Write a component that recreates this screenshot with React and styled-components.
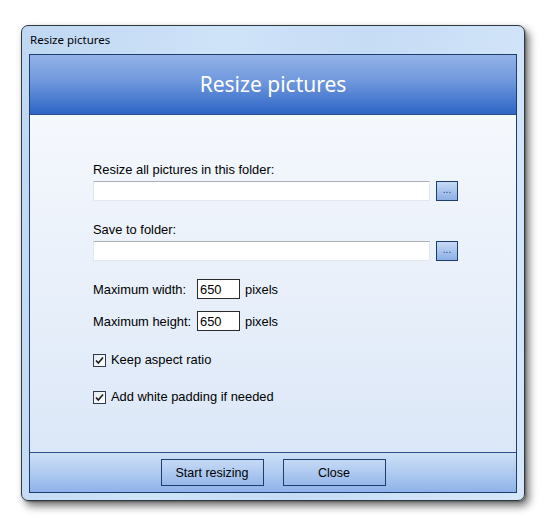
import React from "react";
import styled, { createGlobalStyle } from "styled-components";

const GlobalStyle = createGlobalStyle`
  body {
    margin: 0;
    background: #ffffff;
  }
`;

const App = () => {
  return (
    <>
      <GlobalStyle />
      <Page>
        <Window>
          <TitleBar>Resize pictures</TitleBar>
          <Panel>
            <Header>Resize pictures</Header>
            <Body>
              <Label>Resize all pictures in this folder:</Label>
              <PathRow>
                <PathInput />
                <BrowseButton>...</BrowseButton>
              </PathRow>
              <Label $top={22}>Save to folder:</Label>
              <PathRow>
                <PathInput />
                <BrowseButton>...</BrowseButton>
              </PathRow>
              <SizeRow $top={18}>
                <SizeLabel>Maximum width:</SizeLabel>
                <NumberBox>650</NumberBox>
                <Unit>pixels</Unit>
              </SizeRow>
              <SizeRow $top={12}>
                <SizeLabel>Maximum height:</SizeLabel>
                <NumberBox>650</NumberBox>
                <Unit>pixels</Unit>
              </SizeRow>
              <CheckRow $top={22}>
                <CheckBox checked />
                Keep aspect ratio
              </CheckRow>
              <CheckRow $top={23}>
                <CheckBox checked />
                Add white padding if needed
              </CheckRow>
            </Body>
            <Footer>
              <DialogButton>Start resizing</DialogButton>
              <DialogButton>Close</DialogButton>
            </Footer>
          </Panel>
        </Window>
      </Page>
    </>
  );
};

export default App;

// [Window]--------------------------------------------------------------------------------------------
const Page = styled.div`
  padding: 25px 0 0 21px;
  height: 528px;
  box-sizing: border-box;
`;

const Window = styled.div`
  width: 504px;
  height: 476px;
  box-sizing: border-box;
  border: 1px solid #303840;
  border-radius: 7px;
  background: linear-gradient(100deg, #bfd7f2 0%, #cfe3f8 35%, #c6dcf5 60%, #d6e7fa 100%);
  box-shadow: 4px 5px 9px rgba(0, 0, 0, 0.55), 1px 1px 2px rgba(0, 0, 0, 0.3);
  display: flex;
  flex-direction: column;
`;

const TitleBar = styled.div`
  height: 28px;
  padding: 0 0 2px 8px;
  box-sizing: border-box;
  display: flex;
  align-items: center;
  font-family: "Noto Sans", sans-serif;
  font-size: 11.5px;
  color: #000000;
`;

const Panel = styled.div`
  margin: 0 7px 7px;
  height: 439px;
  box-sizing: border-box;
  border: 1px solid #1d3d6c;
  display: flex;
  flex-direction: column;
`;

// [Header]--------------------------------------------------------------------------------------------
const Header = styled.div`
  height: 60px;
  border-bottom: 1px solid #2b4f86;
  background: linear-gradient(180deg, #93b3e8 0%, #6f97dc 45%, #2d66c6 100%);
  display: flex;
  align-items: center;
  justify-content: center;
  font-family: "Noto Sans", sans-serif;
  font-size: 21px;
  color: #ffffff;
  padding-bottom: 2px;
  box-sizing: border-box;
`;

// [Body]--------------------------------------------------------------------------------------------
const Body = styled.div`
  flex: 1;
  padding: 48px 0 0 63px;
  background: linear-gradient(180deg, #f5f8fd 0%, #e9f0fa 50%, #dbe7f8 100%);
  display: flex;
  flex-direction: column;
  font-family: "Liberation Sans", Arial, sans-serif;
  font-size: 12.9px;
  color: #000000;
`;

const Label = styled.div`
  line-height: 14px;
  margin-top: ${({ $top }) => $top || 0}px;
  margin-bottom: 4px;
`;

const PathRow = styled.div`
  display: flex;
  align-items: center;
  gap: 6px;
`;

const PathInput = styled.div`
  width: 337px;
  height: 20px;
  box-sizing: border-box;
  background: #ffffff;
  border: 1px solid #e3e7ee;
  border-top-color: #acafb6;
`;

const BrowseButton = styled.div`
  width: 22px;
  height: 20px;
  box-sizing: border-box;
  border: 1px solid #1d3d6c;
  background: linear-gradient(180deg, #c6dbf6 0%, #a9c4ee 50%, #8eb0e6 100%);
  display: flex;
  align-items: center;
  justify-content: center;
  font-size: 10px;
  line-height: 10px;
  color: #24406c;
  padding-bottom: 2px;
`;

const SizeRow = styled.div`
  display: flex;
  align-items: center;
  margin-top: ${({ $top }) => $top}px;
`;

const SizeLabel = styled.div`
  width: 104px;
`;

const NumberBox = styled.div`
  width: 43px;
  height: 20px;
  box-sizing: border-box;
  border: 1px solid #2a2a2a;
  background: #ffffff;
  padding-left: 2px;
  display: flex;
  align-items: center;
`;

const Unit = styled.div`
  margin-left: 5px;
`;

// [Checkbox]--------------------------------------------------------------------------------------------
const CheckRow = styled.div`
  display: flex;
  align-items: center;
  gap: 5px;
  line-height: 14px;
  margin-top: ${({ $top }) => $top}px;
`;

const CheckBox = ({ checked }) => (
  <CheckFrame>
    {checked && (
      <svg width="11" height="11" viewBox="0 0 11 11">
        <path d="M2 5.5 L4.3 8 L9 2.5" fill="none" stroke="#1a1a1a" strokeWidth="1.6" />
      </svg>
    )}
  </CheckFrame>
);

const CheckFrame = styled.div`
  width: 13px;
  height: 13px;
  box-sizing: border-box;
  border: 1px solid #333a44;
  background: linear-gradient(135deg, #e4e9f0 0%, #ffffff 100%);
  display: flex;
  align-items: center;
  justify-content: center;
`;

// [Footer]--------------------------------------------------------------------------------------------
const Footer = styled.div`
  height: 39px;
  border-top: 1px solid #2b4f86;
  background: linear-gradient(180deg, #cde0f7 0%, #b0cbf0 50%, #8fb2ea 100%);
  display: flex;
  align-items: center;
  justify-content: center;
  gap: 19px;
`;

const DialogButton = styled.div`
  width: 103px;
  height: 27px;
  box-sizing: border-box;
  border: 1px solid #1d3d6c;
  background: linear-gradient(180deg, #c6daf6 0%, #aec9ef 50%, #98b8eb 100%);
  display: flex;
  align-items: center;
  justify-content: center;
  font-family: "Liberation Sans", Arial, sans-serif;
  font-size: 12.5px;
  color: #000000;
`;
